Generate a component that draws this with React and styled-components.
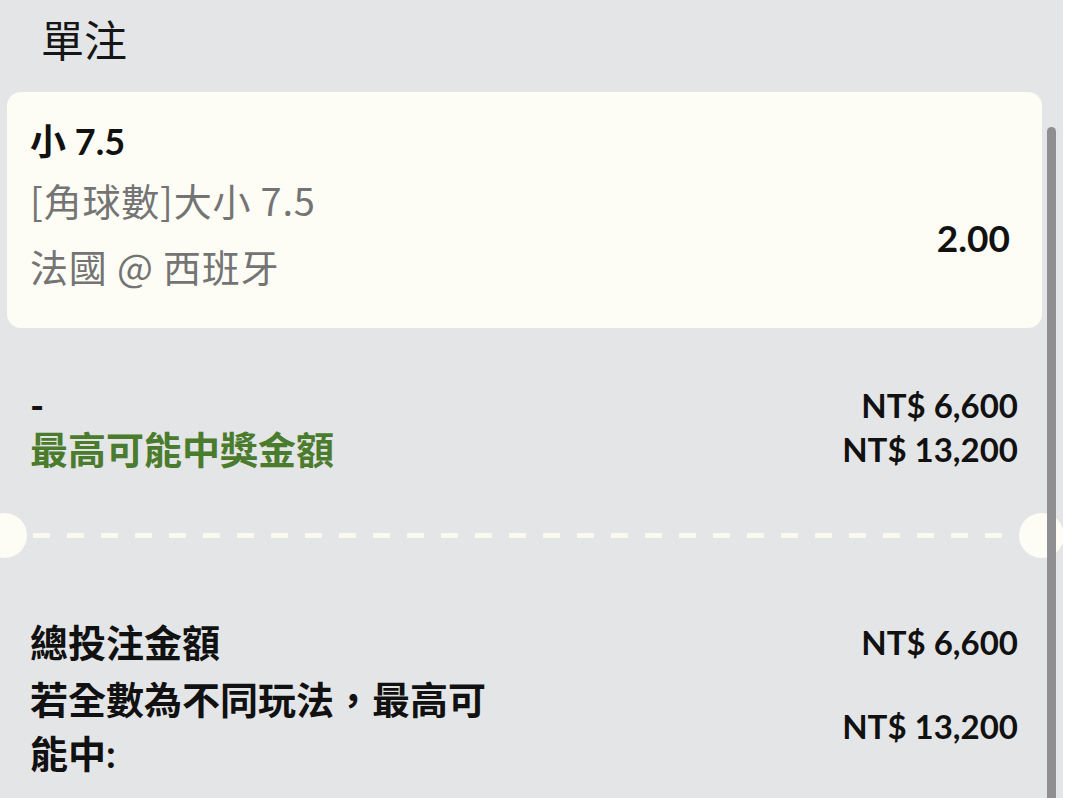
import styled, {createGlobalStyle} from "styled-components";

const GlobalStyle = createGlobalStyle`
    html, body {
        margin: 0;
        padding: 0;
        background: #ffffff;
    }
    body {
        font-family: Lato, "Noto Sans CJK TC", sans-serif;
        color: #111111;
    }
`;

const Panel = styled.div`
    position: relative;
    width: 1063px;
    height: 798px;
    overflow: hidden;
    background: #e4e5e7;
`;

const Header = styled.div`
    height: 92px;
    padding-left: 41px;
    box-sizing: border-box;
`;

const Title = styled.h1`
    margin: 0;
    font-family: "Noto Sans CJK TC", sans-serif;
    font-weight: 400;
    font-size: 43px;
    line-height: 76px;
    color: #161616;
`;

const Card = styled.div`
    display: flex;
    flex-direction: column;
    height: 236px;
    margin: 0 21px 0 7px;
    padding: 20px 32px 0 23px;
    box-sizing: border-box;
    background: #fdfdf5;
    border-radius: 14px;
`;

const Selection = styled.div`
    font-weight: 700;
    font-size: 36px;
    line-height: 58px;
`;

const CardBody = styled.div`
    display: flex;
    align-items: center;
    justify-content: space-between;
`;

const Details = styled.div`
    display: flex;
    flex-direction: column;
    gap: 6px;
`;

const Detail = styled.div`
    font-family: "Noto Sans CJK TC", sans-serif;
    font-size: 38px;
    letter-spacing: 0.8px;
    line-height: 60px;
    color: #747474;
`;

const Odds = styled.div`
    font-weight: 700;
    font-size: 37px;
    margin-top: 8px;
`;

const Summary = styled.div`
    display: flex;
    flex-direction: column;
    padding: 0 45px 0 30px;
    margin-top: ${(p) => p.$top}px;
    gap: ${(p) => p.$gap || 0}px;
`;

const Row = styled.div`
    display: flex;
    justify-content: space-between;
    align-items: center;
`;

const Label = styled.div`
    max-width: 480px;
    font-family: Lato, "Noto Sans CJK TC", sans-serif;
    font-weight: 700;
    font-size: 38px;
    line-height: ${(p) => p.$lh}px;
    color: ${(p) => p.$color || "#111111"};
`;

const Amount = styled.div`
    font-weight: 700;
    font-size: 33px;
    line-height: ${(p) => p.$lh}px;
    white-space: nowrap;
`;

const Separator = styled.div`
    display: flex;
    align-items: center;
    height: 45px;
    margin-top: 42px;
`;

const Notch = styled.div`
    flex: 0 0 45px;
    height: 45px;
    border-radius: 50%;
    background: #fdfdf5;
    margin: ${(p) => (p.$side === "left" ? "0 0 0 -18px" : "0 -1px 0 0")};
`;

const Dashes = styled.div`
    flex: 1;
    height: 5px;
    margin: 0 2px 0 6px;
    background: repeating-linear-gradient(
        to right,
        #f9f9ef 0,
        #f9f9ef 17px,
        transparent 17px,
        transparent 34px
    );
`;

const ScrollThumb = styled.div`
    position: absolute;
    left: 1047px;
    top: 127px;
    width: 9px;
    bottom: -10px;
    border-radius: 5px;
    background: #8f8f92;
`;

export default function App() {
    return (
        <>
            <GlobalStyle />
            <Panel>
                <Header>
                    <Title>單注</Title>
                </Header>
                <Card>
                    <Selection>小 7.5</Selection>
                    <CardBody>
                        <Details>
                            <Detail>[角球數]大小 7.5</Detail>
                            <Detail>法國 @ 西班牙</Detail>
                        </Details>
                        <Odds>2.00</Odds>
                    </CardBody>
                </Card>
                <Summary $top={55}>
                    <Row>
                        <Label $lh={44}>-</Label>
                        <Amount $lh={44}>NT$ 6,600</Amount>
                    </Row>
                    <Row>
                        <Label $lh={44} $color="#4b7b2c">最高可能中獎金額</Label>
                        <Amount $lh={44}>NT$ 13,200</Amount>
                    </Row>
                </Summary>
                <Separator>
                    <Notch $side="left" />
                    <Dashes />
                    <Notch $side="right" />
                </Separator>
                <Summary $top={57} $gap={3}>
                    <Row>
                        <Label $lh={54}>總投注金額</Label>
                        <Amount $lh={54}>NT$ 6,600</Amount>
                    </Row>
                    <Row>
                        <Label $lh={54}>若全數為不同玩法，最高可能中:</Label>
                        <Amount $lh={54}>NT$ 13,200</Amount>
                    </Row>
                </Summary>
                <ScrollThumb />
            </Panel>
        </>
    );
}
